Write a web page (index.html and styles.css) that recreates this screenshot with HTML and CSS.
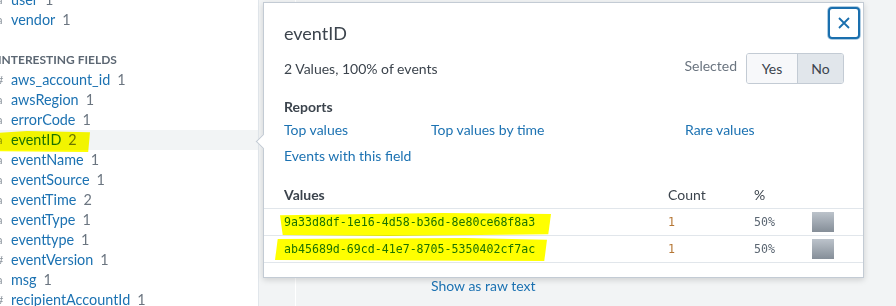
FILE: index.html
```html
<!DOCTYPE html>
<html lang="en">
<head>
  <meta charset="UTF-8" />
  <title>Field summary - eventID</title>
  <link rel="stylesheet" href="styles.css">
</head>
<body>
  <div class="sidebar">
    <ul class="fields">
      <li><i>a</i><span class="name">user</span><span class="num">1</span></li>
      <li><i>a</i><span class="name">vendor</span><span class="num">1</span></li>
    </ul>
    <div class="fields-title">Interesting fields</div>
    <ul class="fields">
      <li><i>#</i><span class="name">aws_account_id</span><span class="num">1</span></li>
      <li><i>a</i><span class="name">awsRegion</span><span class="num">1</span></li>
      <li><i>a</i><span class="name">errorCode</span><span class="num">1</span></li>
      <li class="active"><i>a</i><span class="name">eventID</span><span class="num">2</span><span class="hl hl-side"></span></li>
      <li><i>a</i><span class="name">eventName</span><span class="num">1</span></li>
      <li><i>a</i><span class="name">eventSource</span><span class="num">1</span></li>
      <li><i>a</i><span class="name">eventTime</span><span class="num">2</span></li>
      <li><i>a</i><span class="name">eventType</span><span class="num">1</span></li>
      <li><i>a</i><span class="name">eventtype</span><span class="num">1</span></li>
      <li><i>#</i><span class="name">eventVersion</span><span class="num">1</span></li>
      <li><i>a</i><span class="name">msg</span><span class="num">1</span></li>
      <li><i>#</i><span class="name">recipientAccountId</span><span class="num">1</span></li>
    </ul>
  </div>

  <div class="main">
    <div class="results">
      <a class="raw-link" href="#">Show as raw text</a>
    </div>

    <!-- field summary popover -->
    <div class="popover">
      <div class="pop-head">
        <h2 class="pop-title">eventID</h2>
        <button class="close-btn" aria-label="Close">
          <svg width="14" height="14" viewBox="0 0 14 14"><path d="M2 2 L12 12 M12 2 L2 12" stroke="#1a6fae" stroke-width="1.8" fill="none"/></svg>
        </button>
      </div>

      <div class="summary">
        <span>2 Values, 100% of events</span>
        <div class="selected">
          <span class="selected-label">Selected</span>
          <div class="toggle">
            <button class="toggle-btn">Yes</button>
            <button class="toggle-btn on">No</button>
          </div>
        </div>
      </div>

      <div class="section-title">Reports</div>
      <div class="reports">
        <a href="#">Top values</a>
        <a href="#">Top values by time</a>
        <a href="#">Rare values</a>
        <a href="#">Events with this field</a>
      </div>

      <div class="values">
        <div class="vrow vhead">
          <span>Values</span>
          <span>Count</span>
          <span>%</span>
          <span></span>
        </div>
        <div class="vrow">
          <a class="val" href="#">9a33d8df-1e16-4d58-b36d-8e80ce68f8a3<span class="hl hl-one"></span></a>
          <span class="count">1</span>
          <span class="pct">50%</span>
          <span class="bar"></span>
        </div>
        <div class="vrow">
          <a class="val" href="#">ab45689d-69cd-41e7-8705-5350402cf7ac<span class="hl hl-two"></span></a>
          <span class="count">1</span>
          <span class="pct">50%</span>
          <span class="bar"></span>
        </div>
      </div>
    </div>
  </div>
</body>
</html>
```

FILE: styles.css
```css
body, html {
  margin: 0;
  padding: 0;
  height: 100%;
  overflow: hidden;
}
body {
  display: flex;
  background: #f2f4f5;
  font-family: Lato, 'Open Sans', sans-serif;
  font-size: 14px;
  color: #3c444d;
}
a {
  color: #1c72b2;
  text-decoration: none;
}

/* field sidebar */
.sidebar {
  width: 258px;
  flex-shrink: 0;
  background: #fff;
  border-right: 1px solid #e1e6eb;
  overflow: hidden;
  margin-top: -10px;
}
.fields {
  list-style: none;
  margin: 0;
  padding: 0;
}
.fields li {
  position: relative;
  display: flex;
  align-items: center;
  height: 20px;
  line-height: 20px;
  font-size: 14.4px;
  white-space: nowrap;
}
.fields li.active {
  background: #f2f4f5;
}
.fields i {
  font-style: normal;
  font-size: 11px;
  color: #8a939c;
  width: 10px;
  margin-left: -3px;
  margin-right: 4px;
}
.fields .name {
  color: #1c72b2;
}
.fields .num {
  color: #6b7580;
  margin-left: 7px;
}
.fields-title {
  margin: 20px 0 0 -2px;
  height: 20px;
  line-height: 20px;
  font-size: 12px;
  font-weight: bold;
  text-transform: uppercase;
  color: #5c6773;
}

/* highlighter marks drawn over the text */
.hl {
  position: absolute;
  background: #ffff00;
  mix-blend-mode: multiply;
  pointer-events: none;
}
.hl-side {
  left: 0;
  top: 1px;
  width: 90px;
  height: 21px;
  clip-path: polygon(0 8%, 30% 0, 100% 6%, 98% 100%, 0 96%);
}
.hl-one {
  left: -4px;
  top: -2px;
  width: 271px;
  height: 23px;
  clip-path: polygon(0 10%, 60% 0, 100% 4%, 99% 92%, 40% 100%, 1% 96%);
}
.hl-two {
  left: -9px;
  top: -4px;
  width: 272px;
  height: 23px;
  clip-path: polygon(1% 4%, 70% 0, 100% 8%, 99% 100%, 0 96%);
}

/* main results area */
.main {
  flex: 1;
  position: relative;
}
.results {
  height: 100%;
  margin-left: 36px;
  border-left: 1px solid #fff;
  padding: 277px 0 0 135px;
  box-sizing: border-box;
  line-height: 18px;
}

/* popover */
.popover {
  position: absolute;
  left: 4px;
  top: 2px;
  width: 599px;
  background: #fff;
  border: 1px solid #c3cbd4;
  box-shadow: 0 2px 6px rgba(0,0,0,0.15);
  padding-bottom: 14px;
}
.popover::before {
  content: '';
  position: absolute;
  left: -6px;
  top: 133px;
  width: 10px;
  height: 10px;
  background: #fff;
  border-left: 1px solid #c3cbd4;
  border-bottom: 1px solid #c3cbd4;
  transform: rotate(45deg);
}
.pop-head {
  display: flex;
  justify-content: space-between;
  align-items: flex-start;
  padding: 4px 3px 0 20px;
}
.pop-title {
  margin: 15px 0 0;
  font-size: 18px;
  line-height: 22px;
  font-weight: normal;
}
.close-btn {
  width: 32px;
  height: 32px;
  padding: 0;
  display: flex;
  align-items: center;
  justify-content: center;
  background: #fff;
  border: 2px solid #1a6fae;
  border-radius: 4px;
  box-shadow: 0 0 0 1px rgba(26,111,174,0.35);
}
.summary {
  display: flex;
  justify-content: space-between;
  align-items: center;
  height: 31px;
  margin-top: 9px;
  padding: 0 19px 0 20px;
}
.selected {
  display: flex;
  align-items: center;
  gap: 9px;
}
.selected-label {
  color: #6b7580;
  margin-top: -6px;
}
.toggle {
  display: flex;
  border: 1px solid #c3cbd4;
  border-radius: 3px;
  overflow: hidden;
}
.toggle-btn {
  height: 29px;
  padding: 0;
  border: none;
  background: #f7f8fa;
  color: #3c444d;
  font-family: inherit;
  font-size: 14px;
  width: 50px;
}
.toggle-btn.on {
  width: 46px;
  background: #e1e6eb;
  border-left: 1px solid #c3cbd4;
}
.section-title {
  margin-top: 14px;
  padding-left: 20px;
  font-weight: bold;
  line-height: 18px;
}
.reports {
  display: grid;
  grid-template-columns: 147px 254px 1fr;
  row-gap: 8px;
  margin-top: 5px;
  padding-left: 20px;
  line-height: 18px;
}
.values {
  margin-top: 21px;
}
.vrow {
  display: grid;
  grid-template-columns: 384px 86px 58px 1fr;
  align-items: center;
  height: 26px;
  padding-left: 20px;
  border-bottom: 1px solid #e1e6eb;
}
.vhead {
  height: 22px;
  align-items: start;
  line-height: 18px;
}
.vhead span:first-child {
  font-weight: bold;
}
.val {
  position: relative;
  font-family: 'DejaVu Sans Mono', 'Liberation Mono', monospace;
  font-size: 11.6px;
}
.count {
  font-family: 'DejaVu Sans Mono', monospace;
  font-size: 11.6px;
  color: #b57634;
}
.pct {
  font-family: 'DejaVu Sans Mono', monospace;
  font-size: 11.6px;
  color: #5c6773;
}
.bar {
  width: 22px;
  height: 20px;
  background: linear-gradient(#bcc3cb, #858e98);
}
```
